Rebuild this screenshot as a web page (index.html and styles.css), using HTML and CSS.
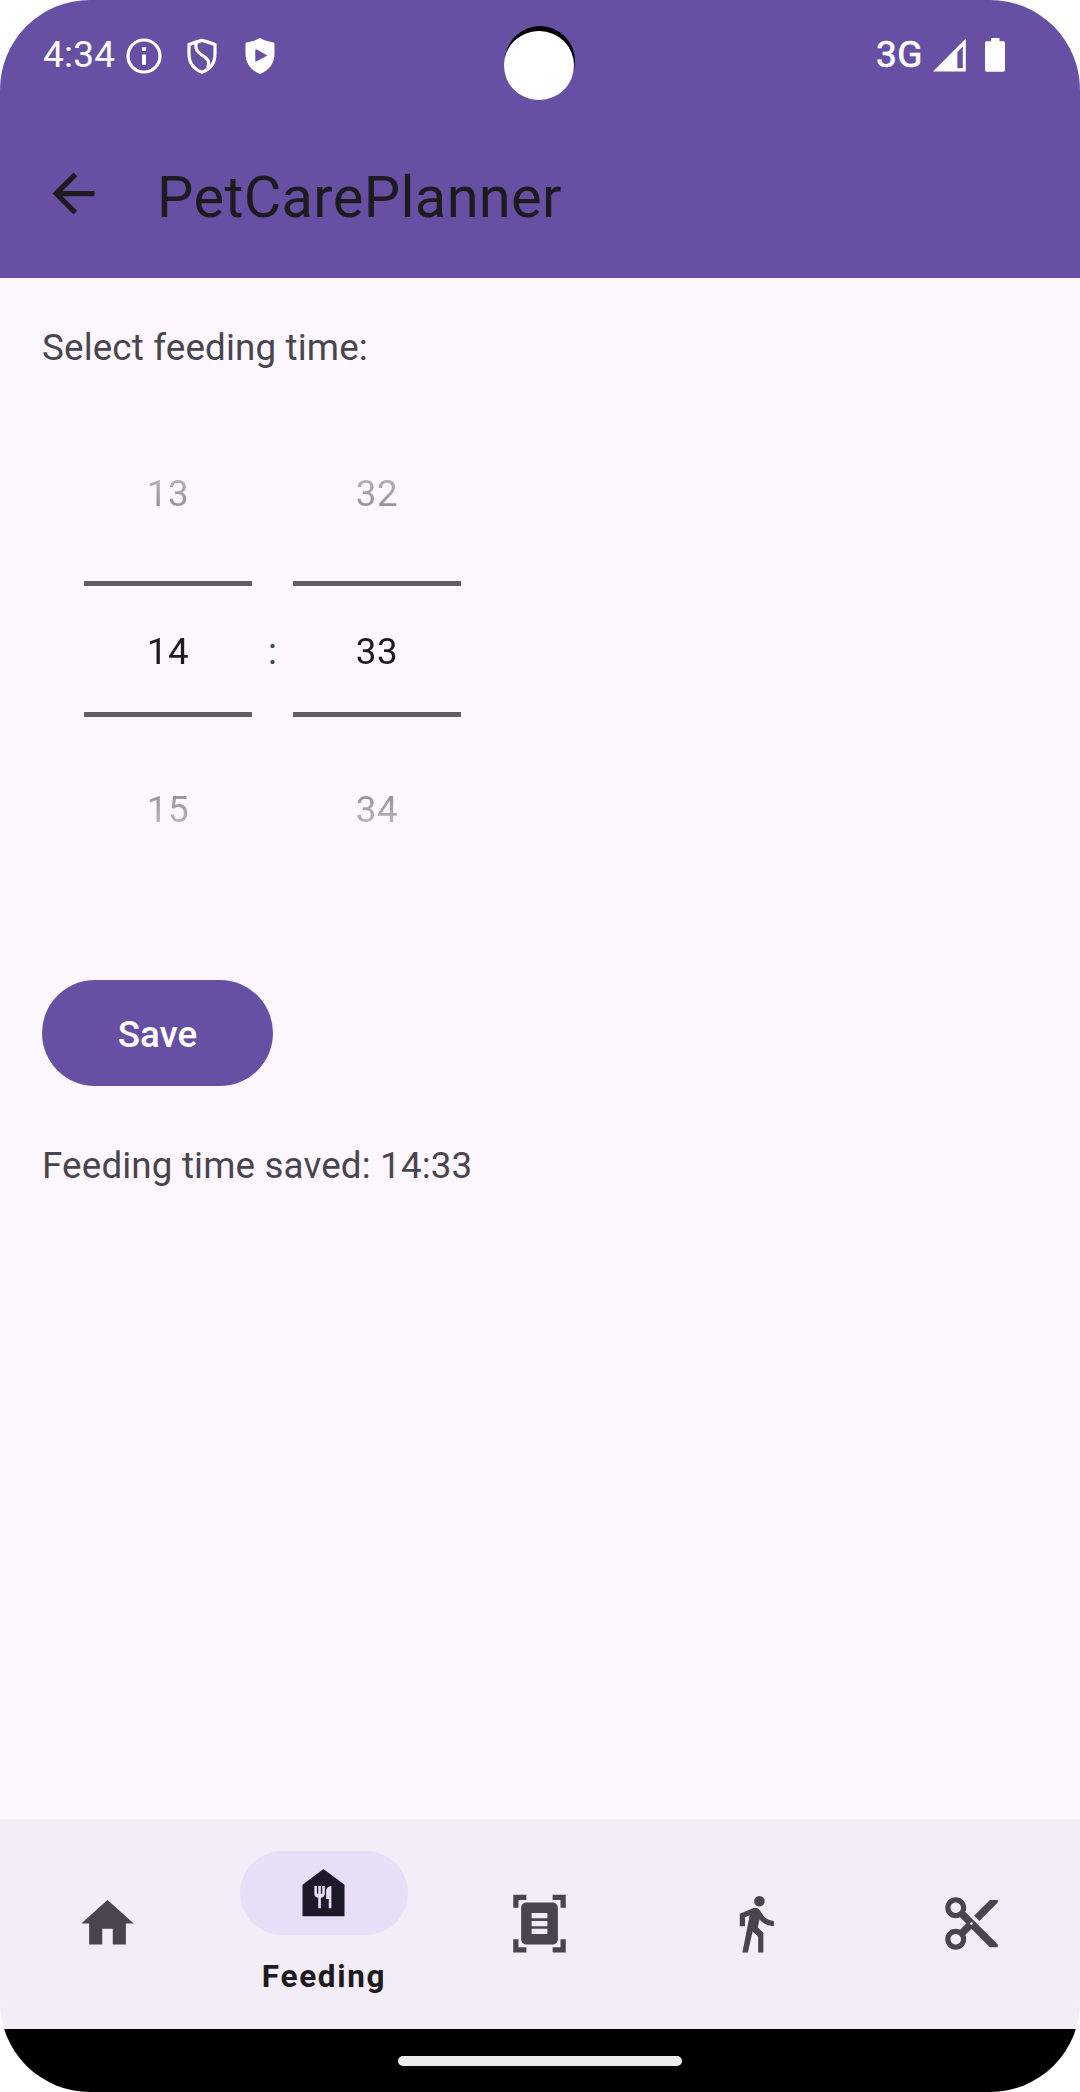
FILE: index.html
```html
<!DOCTYPE html>
<html lang="en">
<head>
<meta charset="utf-8">
<title>PetCarePlanner</title>
<link rel="stylesheet" href="styles.css">
</head>
<body>
<div class="screen">
  <header class="top">
    <div class="status">
      <div class="status-left">
        <span class="clock">4:34</span>
        <svg class="info" width="36" height="36" viewBox="0 0 36 36"><circle cx="18" cy="18" r="16" fill="none" stroke="#fff" stroke-width="3.2"/><path fill="#fff" d="M16 9.2h4v3.8h-4zM16 16.6h4v10.4h-4z"/></svg>
        <svg class="shield" width="30" height="36" viewBox="0 0 30 36"><g fill="none" stroke="#fff" stroke-width="3.2" stroke-linejoin="round"><path d="M15 2.4Q22 4.2 28 6.6V16C28 25 23.5 31 15 34.2C6.500 31 2 25 2 16V6.600Q8 4.200 15 2.400Z"/><path d="M9.200 4.800C6.500 17 20 17 21.500 23.500C22 26 21.500 28 20.600 30"/></g></svg>
        <svg class="play-shield" width="30" height="36" viewBox="0 0 30 36"><path fill="#fff" fill-rule="evenodd" d="M15 0C19.500 2.500 24.500 3.800 28 4.300Q29.500 4.600 29.500 6V15.500C29.500 25.500 24 32.500 15 36C6 32.500.5 25.500.5 15.500V6Q.5 4.600 2 4.300C5.500 3.800 10.500 2.500 15 0ZM10.300 11.600V23.900L22.400 17.400 12 11.400Z"/></svg>
      </div>
      <div class="status-right">
        <span class="network">3G</span>
        <svg class="signal" width="33" height="34" viewBox="0 0 33 34"><path fill="#fff" fill-rule="evenodd" d="M0 33.500 32.800.5V33.500ZM24.400 14V30.200H29.800V8.400Z"/></svg>
        <svg class="battery" width="20" height="34" viewBox="0 0 20 34"><path fill="#fff" d="M6 0h8.500v3.300H18.300Q20 3.300 20 5V32Q20 33.800 18.300 33.800H1.700Q0 33.800 0 32V5Q0 3.300 1.700 3.300H6Z"/></svg>
      </div>
      <div class="camera"><div class="camera-lens"></div></div>
    </div>
    <div class="appbar">
      <svg class="icon back" viewBox="0 0 24 24"><path d="M20 11H7.830l5.590-5.590L12 4l-8 8 8 8 1.410-1.410L7.830 13H20v-2z"/></svg>
      <h1 class="title">PetCarePlanner</h1>
    </div>
  </header>
  <main class="content">
    <p class="label">Select feeding time:</p>
    <div class="picker">
      <div class="wheel">
        <div class="wheel-numbers"><span>13</span><span>14</span><span>15</span></div>
      </div>
      <span class="colon">:</span>
      <div class="wheel">
        <div class="wheel-numbers"><span>32</span><span>33</span><span>34</span></div>
      </div>
    </div>
    <button class="save">Save</button>
    <p class="label result">Feeding time saved: 14:33</p>
  </main>
  <nav class="tabs">
    <div class="tab"><svg class="icon" viewBox="0 0 24 24"><path d="M10 20v-6h4v6h5v-8h3L12 3 2 12h3v8z"/></svg></div>
    <div class="tab active">
      <div class="pill"><svg class="icon" viewBox="0 0 24 24"><path d="M12 3L4 9v12h16V9L12 3zM12.500 12.500c0 .83-.67 1.500-1.500 1.500v4h-1v-4c-.83 0-1.500-.67-1.500-1.500v-3h1v3h.5v-3h1v3h.5v-3h1v3zM15 18h-1v-3.500h-1v-3c0-1.100.9-2 2-2V18z"/></svg></div>
      <span class="tab-label">Feeding</span>
    </div>
    <div class="tab"><svg class="icon" viewBox="0 0 24 24"><path d="M7 3H4v3H2V1h5v2zM22 6V1h-5v2h3v3h2zM7 21H4v-3H2v5h5v-2zM20 18v3h-3v2h5v-5h-2zM19 18c0 1.100-.9 2-2 2H7c-1.100 0-2-.9-2-2V6c0-1.100.9-2 2-2h10c1.100 0 2 .9 2 2v12zM15 8H9v2h6V8zM15 11H9v2h6v-2zM15 14H9v2h6v-2z"/></svg></div>
    <div class="tab"><svg class="icon" viewBox="0 0 24 24"><path d="M13.500 5.500c1.100 0 2-.9 2-2s-.9-2-2-2-2 .9-2 2 .9 2 2 2zM9.800 8.900L7 23h2.100l1.800-8 2.100 2v6h2v-7.500l-2.100-2 .6-3C14.800 12 16.800 13 19 13v-2c-1.900 0-3.500-1-4.300-2.400l-1-1.600c-.4-.6-1-1-1.700-1-.3 0-.5.1-.8.1L6 8.300V13h2V9.600l1.800-.7z"/></svg></div>
    <div class="tab"><svg class="icon" viewBox="0 0 24 24"><path d="M9.640 7.640c.23-.5.36-1.050.36-1.640 0-2.210-1.790-4-4-4S2 3.790 2 6s1.790 4 4 4c.59 0 1.140-.13 1.640-.36L10 12l-2.360 2.360C7.140 14.130 6.590 14 6 14c-2.210 0-4 1.790-4 4s1.790 4 4 4 4-1.790 4-4c0-.59-.13-1.140-.36-1.640L12 14l7 7h3v-1L9.640 7.640zM6 8c-1.100 0-2-.89-2-2s.9-2 2-2 2 .89 2 2-.9 2-2 2zm0 12c-1.100 0-2-.89-2-2s.9-2 2-2 2 .89 2 2-.9 2-2 2zm6-7.500c-.28 0-.5-.22-.5-.5s.22-.5.5-.5.5.22.5.5-.22.500-.5.500zM19 3l-6 6 2 2 7-7V3z"/></svg></div>
  </nav>
  <footer class="gesture"><div class="handle"></div></footer>
</div>
</body>
</html>
```
FILE: styles.css
```css
* { box-sizing: border-box; }

body {
  margin: 0;
  background: #fff;
  font-family: Roboto, "Liberation Sans", sans-serif;
}

.screen {
  width: 1080px;
  height: 2092px;
  display: flex;
  flex-direction: column;
  overflow: hidden;
  border-radius: 90px;
  background: #fef7ff;
}

svg { display: block; flex: none; }

/* Status and app bar */
.top {
  height: 278px;
  background: #6750a3;
}

.status {
  position: relative;
  height: 110px;
  display: flex;
  justify-content: space-between;
  padding: 0 75px 0 43px;
  color: #fff;
}

.status-left, .status-right {
  display: flex;
  align-items: flex-start;
}

.clock, .network {
  font-size: 37px;
  line-height: 44px;
  padding-top: 33px;
}

.clock { width: 83px; letter-spacing: 0.200px; }
.network {
  width: 57px;
  letter-spacing: 0.500px;
  -webkit-text-stroke: 0.700px #fff;
}
.info { margin-top: 38px; }
.shield { margin: 38px 0 0 24.500px; }
.play-shield { margin: 38px 0 0 28px; }
.signal { margin-top: 37.500px; }
.battery { margin: 38px 0 0 19px; }

.camera {
  position: absolute;
  left: 505px;
  top: 26px;
  width: 70px;
  height: 70px;
  border-radius: 50%;
  background: #000;
}

.camera-lens {
  position: absolute;
  left: -0.800px;
  top: 4.700px;
  width: 69.500px;
  height: 69.500px;
  border-radius: 50%;
  background: #fff;
}

.appbar {
  height: 168px;
  display: flex;
  align-items: flex-start;
  padding: 52px 42px 0;
  color: #1d1b20;
}

.icon {
  width: 63px;
  height: 63px;
  fill: currentColor;
  fill-rule: evenodd;
}

.title {
  margin: 0 0 0 52px;
  font-size: 57.750px;
  font-weight: 400;
  line-height: 70px;
  letter-spacing: 0.350px;
}

/* Feeding form */
.content {
  height: 1541px;
  padding: 44px 42px 0;
}

.label {
  margin: 0;
  font-size: 36.750px;
  line-height: 52px;
  letter-spacing: 0.160px;
  color: #49454f;
}

.picker {
  display: flex;
  align-items: center;
  height: 474px;
  margin-top: 38px;
  padding-left: 42px;
  font-size: 36.750px;
}

.wheel {
  width: 168px;
  height: 474px;
  background:
    linear-gradient(#605d63, #605d63) 0 169px / 168px 5px no-repeat,
    linear-gradient(#605d63, #605d63) 0 300px / 168px 5px no-repeat;
}

.wheel-numbers {
  height: 474px;
  padding-top: 3px;
  display: flex;
  flex-direction: column;
  color: #1d1b20;
  -webkit-mask-image: linear-gradient(transparent, #000 206px, #000 272px, transparent 474px);
  mask-image: linear-gradient(transparent, #000 206px, #000 272px, transparent 474px);
}

.wheel-numbers span {
  flex: none;
  height: 158px;
  line-height: 158px;
  text-align: center;
  letter-spacing: 0.656px;
}

.colon {
  width: 41px;
  padding-top: 5px;
  text-align: center;
  color: #49454f;
}

.save {
  display: block;
  width: 231px;
  height: 106px;
  margin: 94px 0 0;
  padding: 2px 0 0;
  border: 0;
  border-radius: 53px;
  background: #6750a3;
  color: #fff;
  font-family: inherit;
  font-size: 36.750px;
  font-weight: 500;
}

.result { margin-top: 54px; }

/* Bottom navigation */
.tabs {
  height: 210px;
  display: grid;
  grid-template-columns: repeat(5, 1fr);
  background: #f3edf7;
  color: #49454f;
}

.tab {
  display: flex;
  flex-direction: column;
  align-items: center;
  justify-content: center;
  padding: 0 2px 2px 0;
}

.tab.active {
  justify-content: flex-start;
  padding: 32px 0 0;
}

.pill {
  width: 168px;
  height: 84px;
  display: flex;
  align-items: center;
  justify-content: center;
  padding: 0 2px 2px 0;
  border-radius: 42px;
  background: #e8def8;
  color: #1d192b;
}

.tab-label {
  margin-top: 21px;
  font-size: 31.500px;
  font-weight: 700;
  line-height: 42px;
  letter-spacing: 1.650px;
  color: #1d1b20;
}

.gesture {
  flex: 1;
  display: flex;
  justify-content: center;
  padding-top: 27px;
  background: #000;
}

.handle {
  width: 284px;
  height: 10px;
  border-radius: 5px;
  background: #ebebeb;
}
```
